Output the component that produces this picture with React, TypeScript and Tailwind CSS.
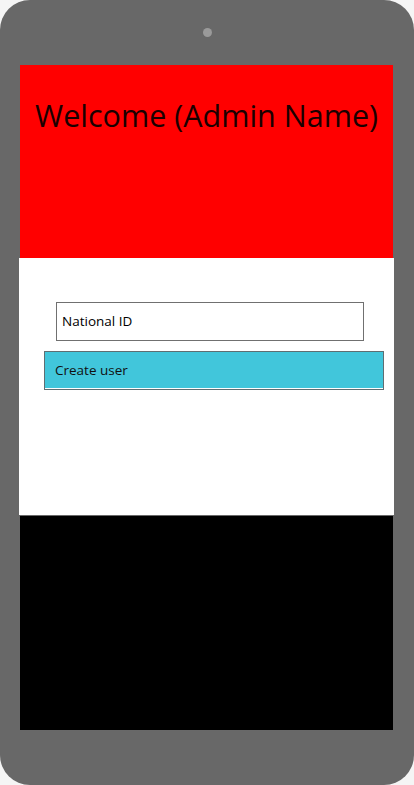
export default function App() {
  return (
    <div className="w-[414px] h-[785px] bg-[#f5f5f5]" style={{ fontFamily: '"Open Sans", "Noto Sans", sans-serif' }}>
      <div className="w-[414px] h-[785px] bg-[#686868] rounded-[30px] flex flex-col items-stretch">
        <div className="h-[65px] flex justify-center pt-[28px]">
          <div className="w-[9px] h-[9px] rounded-full bg-[#9a9a9a]" />
        </div>
        <div className="ml-[20px] mr-[21px] h-[193px] bg-[#ff0000] pl-[15px] pt-[30px]">
          <div className="text-[30.5px] leading-[40px] text-[#1a0000] whitespace-nowrap">Welcome (Admin Name)</div>
        </div>
        <div className="ml-[19px] mr-[20px] h-[257px] bg-white flex flex-col pt-[44px]">
          <div className="ml-[37px] w-[308px] h-[39px] border border-[#707070] flex items-center pl-[5px] text-[13.5px] text-black">National ID</div>
          <div className="ml-[25px] mt-[10px] w-[340px] h-[39px] border border-[#5f6e72] bg-[#41c6db] flex flex-col">
            <div className="flex-1 flex items-center pl-[10px] text-[13.5px] text-[#111]">Create user</div>
            <div className="h-px bg-white" />
          </div>
        </div>
        <div className="ml-[20px] mr-[21px] mt-px h-[214px] bg-black" />
      </div>
    </div>
  );
}
